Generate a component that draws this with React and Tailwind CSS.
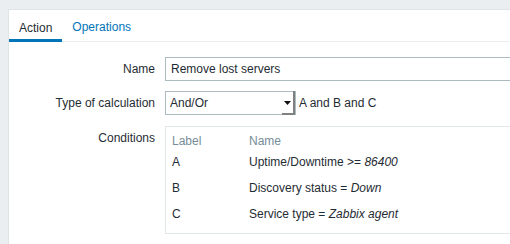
import React from 'react';

const conditions = [
  { label: 'A', name: 'Uptime/Downtime >= ', value: '86400' },
  { label: 'B', name: 'Discovery status = ', value: 'Down' },
  { label: 'C', name: 'Service type = ', value: 'Zabbix agent' },
];

export default function App() {
  return (
    <div className="w-[510px] h-[244px] overflow-hidden bg-[#ebeef0] pl-[8px] pt-[9px] font-['Liberation_Sans',Arial,sans-serif] text-[12px] leading-[14px] text-[#1f2c33]">
      <div className="h-full w-[600px] bg-white border-l border-t border-[#dfe4e7]">
        {/* Tabs */}
        <div className="flex h-[32px] border-b border-[#ebeef0]">
          <div className="flex items-center px-[10px] border-b-[3px] border-[#0275b8] -mb-px pt-[6px]">
            Action
          </div>
          <div className="flex items-center px-[10px] text-[#0275b8] pt-[3px]">
            Operations
          </div>
        </div>

        {/* Form */}
        <div className="pt-[15px] flex flex-col gap-[10px]">
          <div className="flex items-center gap-[10px]">
            <label className="w-[146px] text-right">Name</label>
            <div className="h-[24px] w-[400px] border border-[#acbbc2] px-[5px] flex items-center">
              Remove lost servers
            </div>
          </div>

          <div className="flex items-center gap-[10px]">
            <label className="w-[146px] text-right">Type of calculation</label>
            <div className="flex items-center gap-[3px]">
              <div className="relative h-[24px] w-[131px] border border-[#acbbc2] pl-[4px] flex items-center">
                And/Or
                <div className="absolute right-0 top-[-1px] bottom-[-1px] w-[13px] border-r-2 border-b-2 border-[#808080] flex items-center justify-center">
                  <svg width="7" height="4" viewBox="0 0 7 4" className="mt-[1px]">
                    <path d="M0 0h7L3.5 4z" fill="#111" />
                  </svg>
                </div>
              </div>
              <span>A and B and C</span>
            </div>
          </div>

          <div className="flex items-start gap-[10px] pt-[1px]">
            <label className="w-[146px] text-right pt-[5px]">Conditions</label>
            <div className="w-[400px] h-[108px] border border-[#e2e7ea] pl-[6px] pt-[7px]">
              <div className="flex text-[#768d99]">
                <div className="w-[77px]">Label</div>
                <div>Name</div>
              </div>
              <div className="flex flex-col gap-[12px] mt-[7px]">
                {conditions.map((c) => (
                  <div key={c.label} className="flex">
                    <div className="w-[77px]">{c.label}</div>
                    <div>
                      {c.name}
                      <em>{c.value}</em>
                    </div>
                  </div>
                ))}
              </div>
            </div>
          </div>
        </div>
      </div>
    </div>
  );
}
